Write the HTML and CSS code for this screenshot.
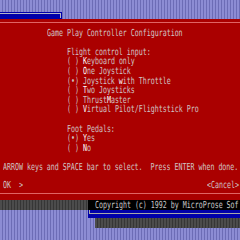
FILE: index.html
```html
<!DOCTYPE html>
<html lang="en">
<head>
<meta charset="UTF-8">
<title>Game Play Controller Configuration</title>
<link rel="stylesheet" href="styles.css">
</head>
<body>

<div class="screen">
    <div class="top stripes">
        <div class="winbar"><div class="winbar-in"></div></div>
    </div>

    <div class="dialog">
        <div class="frame">
            <div class="ln title"><span>Game Play Controller Configuration</span></div>
            <div class="ln"></div>
            <div class="ln opt"><span>Flight control input:</span></div>
            <div class="ln opt"><span>( ) <b>K</b>eyboard only</span></div>
            <div class="ln opt"><span>( ) <b>O</b>ne Joystick</span></div>
            <div class="ln opt"><span>(&bull;) Joystick <b>w</b>ith Throttle</span></div>
            <div class="ln opt"><span>( ) <b>T</b>wo Joysticks</span></div>
            <div class="ln opt"><span>( ) Thrust<b>M</b>aster</span></div>
            <div class="ln opt"><span>( ) <b>V</b>irtual Pilot/Flightstick Pro</span></div>
            <div class="ln"></div>
            <div class="ln opt"><span>Foot Pedals:</span></div>
            <div class="ln opt"><span>(&bull;) <b>Y</b>es</span></div>
            <div class="ln opt"><span>( ) <b>N</b>o</span></div>
            <div class="ln"></div>
            <div class="ln edge"><span>ARROW keys and SPACE bar to select.  Press ENTER when done.</span></div>
            <div class="ln"></div>
            <div class="ln edge buttons"><span>OK  &gt;</span><span>&lt;Cancel&gt;</span></div>
        </div>
    </div>

    <div class="bottom">
        <div class="bottom-left">
            <div class="shade band"></div>
            <div class="stripes fill"></div>
        </div>
        <div class="bottom-right">
            <div class="copy">
                <div class="copy-in">
                    <div class="ln copy-text"><span>Copyright (c) 1992 by MicroProse Sof</span></div>
                </div>
            </div>
            <div class="shadow-row">
                <div class="stripes gap"></div>
                <div class="shade fill"></div>
            </div>
            <div class="stripes fill"></div>
        </div>
    </div>
</div>

</body>
</html>
```

FILE: styles.css
```css
body {
    margin: 0;
    padding: 0;
    background-color: #7c7cc4;
    overflow: hidden;
}

.screen {
    width: 240px;
    height: 240px;
    display: flex;
    flex-direction: column;
    overflow: hidden;
    font-family: "DejaVu Sans Mono", monospace;
}

.stripes {
    background: repeating-linear-gradient(90deg, #8c8cd4 0 2px, #6c6cb6 2px 3px);
}

.shade {
    background: repeating-linear-gradient(90deg, #4c4c4c 0 2px, #363636 2px 3px);
}

/* top strip with the edge of another window */
.top {
    height: 19px;
    flex: none;
    display: flex;
    flex-direction: column;
    justify-content: flex-end;
}

.winbar {
    width: 62px;
    height: 7px;
    background-color: #0000aa;
    padding-top: 1px;
    box-sizing: border-box;
}

.winbar-in {
    height: 4px;
    margin-right: 1px;
    border-top: 1px solid #b4b4c8;
    border-right: 1px solid #b4b4c8;
}

/* red dialog */
.dialog {
    height: 181px;
    flex: none;
    background-color: #aa0000;
    padding-top: 3px;
    box-sizing: border-box;
}

.frame {
    border-top: 1px solid #e06464;
    border-bottom: 1px solid #e06464;
    padding-top: 5px;
    height: 172px;
    box-sizing: border-box;
}

/* text rows: 4px columns, 9.6px rows */
.ln {
    height: 9.6px;
    line-height: 9.6px;
    font-size: 6.645px;
    white-space: pre;
    color: #d0c4c4;
}

.ln span {
    display: inline-block;
    line-height: 6.4px;
    vertical-align: top;
    margin-top: 1.6px;
    transform: scaleY(1.45);
}

.ln b {
    font-weight: normal;
    color: #ffffff;
}

.title {
    padding-left: 47px;
}

.opt {
    padding-left: 67px;
}

.edge {
    padding-left: 3px;
}

.buttons {
    display: flex;
    justify-content: space-between;
    padding-right: 1px;
}

/* bottom: shadow, copyright window */
.bottom {
    flex: 1;
    display: flex;
}

.bottom-left {
    width: 88px;
    display: flex;
    flex-direction: column;
}

.band {
    height: 10px;
}

.fill {
    flex: 1;
}

.bottom-right {
    flex: 1;
    display: flex;
    flex-direction: column;
}

.copy {
    height: 18px;
    background-color: #0000aa;
}

.copy-in {
    margin-left: 1px;
    height: 13px;
    border-left: 1px solid #a8a8a8;
    border-bottom: 1px solid #a8a8a8;
}

.copy-text {
    background-color: #000000;
    color: #c8c8c8;
    margin-left: -2px;
    padding-left: 7px;
}

.shadow-row {
    height: 10px;
    display: flex;
}

.gap {
    width: 7px;
}
```
